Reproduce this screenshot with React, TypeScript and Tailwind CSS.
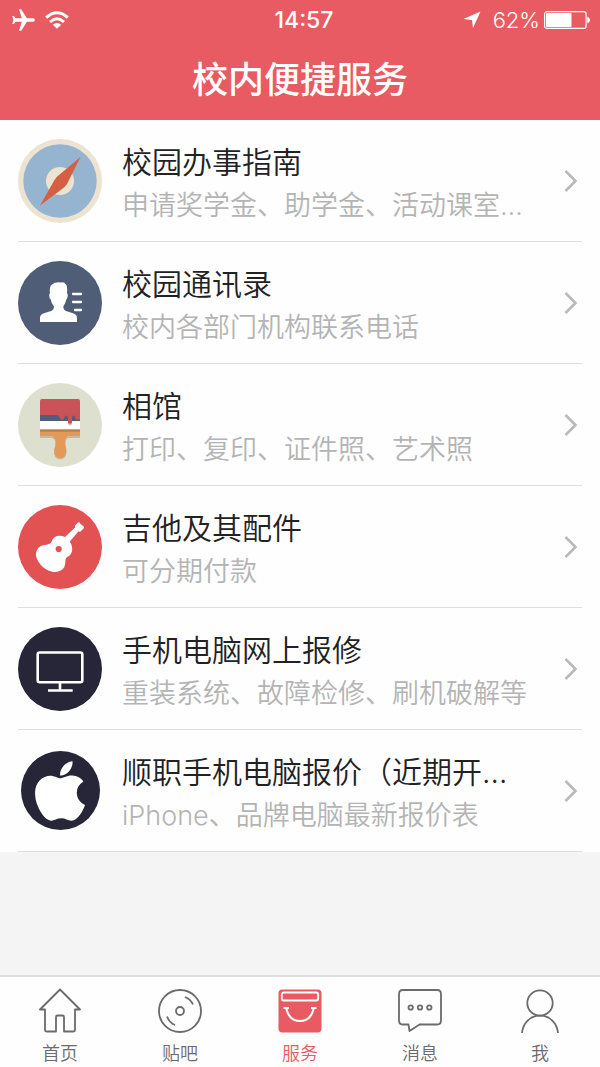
import type { ReactNode } from "react";
import { FaApple } from "react-icons/fa";
import { MdFlight } from "react-icons/md";

function CompassIcon() {
  return (
    <svg viewBox="0 0 84 84" className="size-full" aria-hidden="true">
      <circle cx="42" cy="42" r="42" fill="#ece3d1" />
      <circle cx="42" cy="42" r="36.7" fill="#95b4cf" />
      <circle cx="42" cy="42" r="14" fill="#ece3d1" />
      <path d="M62.5 18 L49 45 Q47 48 44 50 L22 66.5 L36.5 41 Q38 38 41 36 Z" fill="#d45f45" />
    </svg>
  );
}

function ContactIcon() {
  return (
    <svg viewBox="0 0 84 84" className="size-full" aria-hidden="true">
      <circle cx="42" cy="42" r="42" fill="#4f5e76" />
      <path
        d="M22 61 V57 Q22 53.5 26 52.3 L33 50 Q36 48.8 36 45.5 Q33.3 42.500 32.7 38.500 Q31 37 31.200 33.500 Q31.500 32.500 32 32 Q31 25.500 34 23.500 Q37 20.800 43 21.500 Q46 20.800 47.500 23 Q49.800 25 49 32 Q50 33 49.700 35 Q49.500 37.800 48.300 38.500 Q47.500 42.500 45.300 45.500 Q45.300 48.800 48 50 L55 52.300 Q59 53.500 59 57 V61 Z"
        fill="#fff"
      />
      <path d="M55 33 H63 M55 41 H63 M57 49 H63" stroke="#fff" strokeWidth="2.300" strokeLinecap="round" />
    </svg>
  );
}

function BrushIcon() {
  return (
    <svg viewBox="0 0 84 84" className="size-full" aria-hidden="true">
      <circle cx="42" cy="42" r="42" fill="#dddfcf" />
      <path d="M22 50 H62 V55 H50 Q48 56 47.500 59 Q47 63 48.500 67 Q49 76 42 76.500 Q35.500 76 36 67 Q38 63 37.500 59 Q37 56 34 55 H22 Z" fill="#c4b9a1" />
      <path d="M22 48 H62 V53 H50 Q47.500 54 47 58 Q47 62 48 66 Q49.500 75 42 75 Q35 75 36.500 66 Q38 62 37.500 58 Q37 54 34 53 H22 Z" fill="#e39a58" />
      <rect x="22" y="31" width="40" height="7.500" fill="#4f5e7a" />
      <rect x="22" y="38" width="40" height="9" fill="#fff" />
      <rect x="22" y="46.300" width="40" height="2.400" fill="#b77f50" />
      <path d="M50 38 V41 Q52 44 54 41 V38 Z" fill="#dbb5bd" />
      <path d="M24 16 H60 Q62 16 62 18 V36.500 H57.500 V34 Q56 31 54 34 V39.500 Q52 42 50 39.500 V34 Q48.500 31 46.500 34 Q46 37 44 37 Q42 37 41.500 34 Q40.500 32 38 32 H22 V18 Q22 16 24 16 Z" fill="#c95358" />
    </svg>
  );
}

function GuitarIcon() {
  return (
    <svg viewBox="0 0 84 84" className="size-full" aria-hidden="true">
      <circle cx="42" cy="42" r="42" fill="#e25252" />
      <path
        d="M18 48 Q19 41.500 26 40 Q32 39.500 33.500 37 Q34.500 32.500 39 31 Q43 30 47 32 L57 22.500 Q56.500 20.500 58 19.500 L60 17.500 Q61.800 16.800 62.500 19 L65.500 21.300 Q66.800 22.200 65.500 23.500 L63 26 Q61.800 27.300 60.300 26.600 L51.800 36.500 Q54.800 41 54 46.500 Q52.500 51 49 52 Q47 53.500 47.300 57 Q47.500 62 43.500 65 Q39 68 33.500 66.500 Q27 65 22.500 59.500 Q17.500 53.500 18 48 Z"
        fill="#fff"
      />
      <circle cx="40.700" cy="44" r="3.100" fill="#e25252" />
    </svg>
  );
}

function MonitorIcon() {
  return (
    <svg viewBox="0 0 84 84" className="size-full" aria-hidden="true">
      <circle cx="42" cy="42" r="42" fill="#272638" />
      <g fill="none" stroke="#fff" strokeWidth="2.600">
        <rect x="19.700" y="25.500" width="44.600" height="29.800" rx="2" />
        <path d="M42 55 V63.500 M30 63.500 H54.700" />
      </g>
    </svg>
  );
}

function AppleIcon() {
  return (
    <span className="flex size-[79px] items-center justify-center rounded-full bg-[#272638] text-white">
      <FaApple className="size-[68px]" aria-hidden="true" />
    </span>
  );
}

type Service = { title: string; note: string; icon: ReactNode };

const services: Service[] = [
  { title: "校园办事指南", note: "申请奖学金、助学金、活动课室…", icon: <CompassIcon /> },
  { title: "校园通讯录", note: "校内各部门机构联系电话", icon: <ContactIcon /> },
  { title: "相馆", note: "打印、复印、证件照、艺术照", icon: <BrushIcon /> },
  { title: "吉他及其配件", note: "可分期付款", icon: <GuitarIcon /> },
  { title: "手机电脑网上报修", note: "重装系统、故障检修、刷机破解等", icon: <MonitorIcon /> },
  { title: "顺职手机电脑报价（近期开…", note: "iPhone、品牌电脑最新报价表", icon: <AppleIcon /> },
];

function ServiceRow({ title, note, icon }: Service) {
  return (
    <li className="border-b border-[#dedede]">
      <a href="#" className="flex items-center gap-5 py-[13px]">
        <span className="flex size-[84px] shrink-0 items-center justify-center">{icon}</span>
        <span className="flex min-w-0 flex-1 flex-col pt-2">
          <span className="truncate text-[30px] leading-[42px] font-[350] text-[#222222]">{title}</span>
          <span className="truncate text-[27px] leading-[45px] font-[350] text-[#b4b4b4]">{note}</span>
        </span>
        <svg viewBox="0 0 14 24" className="mr-1 h-6 w-3.5 shrink-0" fill="none" stroke="#b9b9b9" strokeWidth="2.600" aria-hidden="true">
          <path d="M1.500 2 L11.500 12 L1.500 22" />
        </svg>
      </a>
    </li>
  );
}

const tabs: { label: string; active?: boolean; icon: ReactNode }[] = [
  {
    label: "首页",
    icon: <path d="M22 1.500 L2 21.500 H7 V42 Q7 43.500 8.500 43.500 H18 V29 Q18 27.500 19.500 27.500 H24.500 Q26 27.500 26 29 V43.500 H35.500 Q37 43.500 37 42 V21.500 H42 Z" />,
  },
  {
    label: "贴吧",
    icon: (
      <>
        <circle cx="22" cy="23" r="21" />
        <circle cx="22" cy="23" r="4" />
        <path d="M27 9 Q32.500 11 35 16.500 M17 37 Q11.500 35 9 28.500" />
      </>
    ),
  },
  {
    label: "服务",
    active: true,
    icon: (
      <>
        <rect x="0.500" y="1.500" width="43" height="43" rx="4" fill="#e95b62" stroke="none" />
        <rect x="3.800" y="4.500" width="36.400" height="8" rx="2" stroke="#fff" />
        <path d="M5.500 20 H11 M33 20 H38.500 M8.200 20 Q11 33 22 33 Q33 33 35.800 20" stroke="#fff" strokeWidth="2" />
      </>
    ),
  },
  {
    label: "消息",
    icon: (
      <>
        <path d="M5 2 H39 Q43 2 43 6 V32.500 Q43 36.500 39 36.500 H21.500 L11.500 43 L10.500 36.500 H5 Q1 36.500 1 32.500 V6 Q1 2 5 2 Z" />
        <circle cx="12.700" cy="19.500" r="2.200" />
        <circle cx="22" cy="19.500" r="2.200" />
        <circle cx="31.300" cy="19.500" r="2.200" />
      </>
    ),
  },
  {
    label: "我",
    icon: (
      <>
        <circle cx="22" cy="15" r="12.700" />
        <path d="M4 45 C5 35 12 27.700 22 27.700 C32 27.700 39 35 40 45" />
      </>
    ),
  },
];

export default function App() {
  return (
    <div className="flex min-h-screen flex-col bg-[#f4f4f4] font-[Inter,'Noto_Sans_CJK_SC',sans-serif]">
      <header className="bg-[#e95b62] text-white">
        <div className="grid h-10 grid-cols-3 items-center px-2.5">
          <div className="flex items-center gap-2">
            <MdFlight className="size-[27px] rotate-90" aria-label="飞行模式" />
            <svg viewBox="0 0 24 18" className="h-[18px] w-6" fill="none" stroke="currentColor" role="img" aria-label="Wi-Fi">
              <path d="M1.200 6.500 Q12 -3 22.800 6.500" strokeWidth="3" />
              <path d="M5 11 Q12 4.500 19 11" strokeWidth="3" />
              <path d="M7.800 13.800 Q12 10 16.200 13.800 L12 17.800 Z" fill="currentColor" stroke="none" />
            </svg>
          </div>
          <time className="pl-2 text-center text-[23px] leading-10 font-medium">14:57</time>
          <div className="flex items-center justify-end">
            <svg viewBox="0 0 18 18" className="mr-3 size-[18px]" fill="currentColor" aria-hidden="true">
              <path d="M17.500 0.500 L10 17 L9 9 L0.500 8 Z" />
            </svg>
            <span className="text-[22px] leading-10 font-light">62%</span>
            <svg viewBox="0 0 46 18" className="ml-1 h-[18px] w-[46px]" role="img" aria-label="电量 62%">
              <rect x="0.600" y="0.600" width="41.500" height="16.800" rx="2.500" fill="none" stroke="#fff" strokeWidth="1.200" />
              <rect x="2" y="2" width="25.500" height="14" rx="1" fill="#fff" />
              <path d="M43.300 5.500 Q46 6.500 46 9 Q46 11.500 43.300 12.500 Z" fill="#fff" />
            </svg>
          </div>
        </div>
        <h1 className="text-center text-[36px] leading-[80px] font-medium">校内便捷服务</h1>
      </header>

      <main className="flex-1">
        <ul className="bg-[#fefefe] px-[18px]">
          {services.map((service) => (
            <ServiceRow key={service.title} {...service} />
          ))}
        </ul>
      </main>

      <nav className="grid grid-cols-5 border-t-2 border-[#dcdcdc] bg-[#fefefe] pt-[11px]">
        {tabs.map(({ label, active, icon }) => (
          <a
            key={label}
            href="#"
            aria-current={active ? "page" : undefined}
            className={active ? "flex flex-col items-center gap-2 text-[#e95b62]" : "flex flex-col items-center gap-2 text-[#6b6b6b]"}
          >
            <svg viewBox="0 0 44 45" className="h-[45px] w-11" fill="none" stroke="currentColor" strokeWidth="1.800" strokeLinejoin="round" aria-hidden="true">
              {icon}
            </svg>
            <span className="text-[18px] leading-[26px] font-[350]">{label}</span>
          </a>
        ))}
      </nav>
    </div>
  );
}
